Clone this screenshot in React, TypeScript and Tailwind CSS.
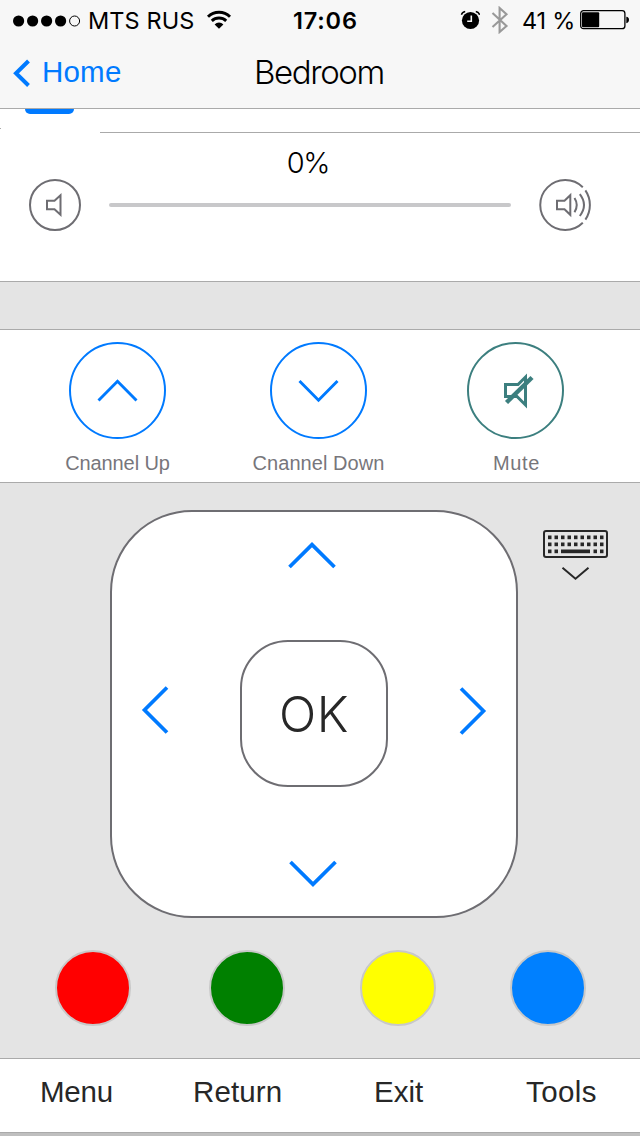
import type { ReactNode } from "react";

const helvetica = "font-['Liberation_Sans',Arial,sans-serif]";

function Wifi() {
  return (
    <svg width="26" height="20" viewBox="0 0 26 20" fill="none" stroke="#000" strokeWidth="2.9">
      <path d="M2 6.8A15.6 15.6 0 0 1 24 6.8" />
      <path d="M5.8 10.9A10.4 10.4 0 0 1 20.2 10.9" />
      <path d="M8.6 14.4A6.2 6.2 0 0 1 17.4 14.4L13 18.8Z" fill="#000" stroke="none" />
    </svg>
  );
}

function Alarm() {
  return (
    <svg width="20" height="20" viewBox="0 0 20 20" fill="none">
      <circle cx="10.5" cy="10.5" r="8.6" fill="#000" />
      <path d="M1.4 4.8Q2.2 2 5.2 1.5M19.6 4.8Q18.8 2 15.8 1.5" stroke="#000" strokeWidth="1.4" />
      <path d="M11.3 5.6V11.2H7.2" stroke="#f7f7f7" strokeWidth="1.6" />
    </svg>
  );
}

function Bluetooth() {
  return (
    <svg width="18" height="28" viewBox="0 0 18 28" fill="none" stroke="#999" strokeWidth="2.1">
      <path d="M1.5 7L15.5 20L8.6 26V2L15.5 8.3L1.5 21" />
    </svg>
  );
}

function Battery() {
  return (
    <svg width="50" height="20" viewBox="0 0 50 20">
      <rect x=".7" y=".7" width="44.2" height="18" rx="2.8" fill="none" stroke="#000" strokeWidth="1.3" />
      <rect x="2" y="2.3" width="17.2" height="15" rx="1" />
      <path d="M46.3 6.7Q49 7 49 9.8T46.3 13.2Z" />
    </svg>
  );
}

function Speaker({ loud = false }: { loud?: boolean }) {
  return (
    <svg width="54" height="54" viewBox="0 0 54 54" fill="none" stroke="#6e6d72" strokeWidth="2">
      {loud ? (
        <>
          <path d="M44.8 9.2A25 25 0 1 0 44.8 44.8" />
          <path d="M47.4 12.4A26 26 0 0 1 47.4 41.6" />
          <path d="M36.5 20Q41 27 36.5 34.2M41.8 16.2Q50.2 27 41.8 38" />
          <path d="M19 22.8H26.5L32.3 17.2V36.8L26.5 31.2H19Z" />
        </>
      ) : (
        <>
          <circle cx="27" cy="27" r="25" />
          <path d="M19 22.8H26.5L32.5 17.2V36.8L26.5 31.2H19Z" />
        </>
      )}
    </svg>
  );
}

function RoundAction({ color, label, width, left, tracking, children }: {
  color: string; label: string; width: string; left: string; tracking: string; children: ReactNode;
}) {
  return (
    <button className={`flex flex-col items-center ${width} ${left}`}>
      <svg width="97" height="97" viewBox="0 0 97 97" fill="none" stroke={color}>
        <circle cx="48.5" cy="48.5" r="47.5" strokeWidth="2" />
        {children}
      </svg>
      <span className={`mt-[12px] h-6 text-[20px] leading-6 whitespace-nowrap text-[#77767b] ${tracking}`}>{label}</span>
    </button>
  );
}

function Keyboard() {
  const columns = [0, 1, 2, 3, 4, 5, 6, 7, 8];
  return (
    <svg width="66" height="52" viewBox="0 0 66 52" fill="none" stroke="#272727">
      <rect x="1" y="1" width="63" height="26" rx="2" strokeWidth="2" />
      <g fill="#272727" stroke="none">
        {columns.map((i) => (
          <g key={i}>
            <rect x={5 + i * 6.5} y="5.5" width="3.5" height="3.7" />
            <rect x={5 + i * 6.5} y="12.5" width="3.5" height="3.7" />
            {(i < 2 || i > 6) && <rect x={5 + i * 6.5} y="19.5" width="3.5" height="3.7" />}
          </g>
        ))}
        <rect x="18" y="19.5" width="29" height="3.7" />
      </g>
      <path d="M19.5 37.7L32.5 48.7L45.5 37.7" strokeWidth="2" />
    </svg>
  );
}

function Vertical({ down = false }: { down?: boolean }) {
  return (
    <svg width="50" height="28" viewBox="0 0 50 28" fill="none" stroke="#007aff" strokeWidth="3.7">
      <path d={down ? "M2.5 2L25 24.3L47.5 2" : "M2.5 26L25 3.7L47.5 26"} />
    </svg>
  );
}

function Horizontal({ right = false }: { right?: boolean }) {
  return (
    <svg width="28" height="50" viewBox="0 0 28 50" fill="none" stroke="#007aff" strokeWidth="3.7">
      <path d={right ? "M2 2.5L24.5 25L2 47.5" : "M26 2.5L3.5 25L26 47.5"} />
    </svg>
  );
}

export default function App() {
  return (
    <main className={`flex h-[1136px] w-[640px] flex-col overflow-hidden bg-white ${helvetica}`}>
      <header className="h-[109px] shrink-0 border-b border-[#aaa] bg-[#f7f7f7]">
        <div className="flex h-10 items-center font-['Inter',sans-serif] text-[23.5px] leading-10 text-black">
          <div className="flex w-[293px] items-center pl-[13px]">
            <svg className="mt-px" width="68" height="12" viewBox="0 0 68 12">
              <circle cx="5.6" cy="6" r="5.6" />
              <circle cx="19.6" cy="6" r="5.6" />
              <circle cx="33.6" cy="6" r="5.6" />
              <circle cx="47.6" cy="6" r="5.6" />
              <circle cx="61.6" cy="6" r="5" fill="none" stroke="#000" />
            </svg>
            <span className="ml-[7px] w-[118px] pt-[2px] tracking-[.1px] whitespace-nowrap">MTS RUS</span>
            <Wifi />
          </div>
          <span className="w-[167px] pt-[2px] font-semibold tracking-[.8px] whitespace-nowrap">17:06</span>
          <Alarm />
          <span className="ml-[11px]"><Bluetooth /></span>
          <span className="ml-[13px] w-[58px] pt-[2px] tracking-[-.2px] whitespace-nowrap">41 %</span>
          <Battery />
        </div>
        <div className="flex h-[68px]">
          <button className="flex w-[254px] items-start pl-3 text-[#007aff]">
            <svg className="mt-[19px]" width="19" height="28" viewBox="0 0 19 28" fill="none" stroke="currentColor" strokeWidth="4">
              <path d="M16.5 2L4 14.3L16.5 26.5" />
            </svg>
            <span className="mt-[12px] ml-[11px] text-[29.5px] leading-10 tracking-[.2px]">Home</span>
          </button>
          <h1 className="mt-[12px] font-['Inter',sans-serif] text-[33px] leading-10 font-light tracking-[-1.4px] text-black">Bedroom</h1>
        </div>
      </header>

      <section className="flex h-[173px] shrink-0 flex-col border-b border-[#aaa]">
        <div className="flex h-6 items-start">
          <div className="flex h-5 w-[100px] flex-col">
            <div className="ml-[25px] h-[5px] w-[49px] rounded-b-[5px] bg-[#007aff]" />
            <div className="mt-[14px] h-px w-px bg-[#aaa]" />
          </div>
          <div className="h-6 flex-1 border-b border-[#aaa]" />
        </div>
        <div className="mt-[10px] w-[616px] text-center font-['Inter',sans-serif] text-[29px] leading-10 font-light tracking-[-1.3px] text-black">0%</div>
        <div className="mt-[-5px] flex items-center pl-7">
          <Speaker />
          <div className="mx-[27px] h-1 w-[402px] rounded-full bg-[#c8c8ca]" />
          <Speaker loud />
        </div>
      </section>

      <div className="h-12 shrink-0 border-b border-[#aaa] bg-[#e4e4e4]" />

      <section className="flex h-[153px] shrink-0 border-b border-[#aaa] pt-3">
        <RoundAction color="#007aff" label="Cnannel Up" width="w-[135px]" left="ml-[50px]" tracking="tracking-[-.1px]">
          <path d="M29.5 58.5L48.5 39.3L67.5 58.5" strokeWidth="2.9" />
        </RoundAction>
        <RoundAction color="#007aff" label="Cnannel Down" width="w-[145px]" left="ml-[61px]" tracking="tracking-[.05px]">
          <path d="M29.5 39L48.5 58.2L67.5 39" strokeWidth="2.9" />
        </RoundAction>
        <RoundAction color="#3c7f7f" label="Mute" width="w-[97px]" left="ml-[76px]" tracking="tracking-[.6px] pl-[2px]">
          <path d="M38.5 42.5H51L58.5 35V63L50 54.5H38.5Z" strokeWidth="3" />
          <path d="M39.5 60.5L65 35.5" strokeWidth="4.4" />
        </RoundAction>
      </section>

      <section className="flex h-[576px] shrink-0 flex-col border-b border-[#aaa] bg-[#e4e4e4]">
        <div className="flex items-start pt-[27px]">
          <div className="ml-[110px] grid h-[408px] w-[408px] grid-cols-[128px_148px_128px] grid-rows-[128px_147px_129px] rounded-[82px] border-2 border-[#6e6d72] bg-white">
            <button className="col-start-2 row-start-1 flex items-start pt-[29px] pl-[47px]"><Vertical /></button>
            <button className="col-start-1 row-start-2 flex items-start pt-[45px] pl-[29px]"><Horizontal /></button>
            <button className="col-start-2 row-start-2 flex items-center justify-center rounded-[48px] border-2 border-[#6e6d72] pt-[2px] font-['Inter',sans-serif] text-[49px] font-light tracking-[.5px] text-[#272727]">OK</button>
            <button className="col-start-3 row-start-2 flex items-start pt-[46px] pl-[71px]"><Horizontal right /></button>
            <button className="col-start-2 row-start-3 flex items-start pt-[73px] pl-[48px]"><Vertical down /></button>
          </div>
          <button className="mt-[20px] ml-[25px]"><Keyboard /></button>
        </div>
        <div className="mt-8 flex">
          <button className="ml-[55px] size-[76px] rounded-full border-2 border-[#c8c8c8] bg-[#ff0000]" />
          <button className="ml-[78px] size-[76px] rounded-full border-2 border-[#c8c8c8] bg-[#008000]" />
          <button className="ml-[75px] size-[76px] rounded-full border-2 border-[#c8c8c8] bg-[#ffff00]" />
          <button className="ml-[74px] size-[76px] rounded-full border-2 border-[#c8c8c8] bg-[#0080ff]" />
        </div>
      </section>

      <nav className="flex h-[73px] shrink-0 items-start pt-[13px] pl-[40px] text-left text-[29.5px] leading-10 text-[#272727]">
        <button className="w-[153px] text-left tracking-[-.2px]">Menu</button>
        <button className="w-[181px] text-left tracking-[.1px]">Return</button>
        <button className="w-[152px] text-left">Exit</button>
        <button className="text-left tracking-[.4px]">Tools</button>
      </nav>
      <footer className="h-1 shrink-0 border-t border-[#aaa] bg-[#bfbfbf]" />
    </main>
  );
}
